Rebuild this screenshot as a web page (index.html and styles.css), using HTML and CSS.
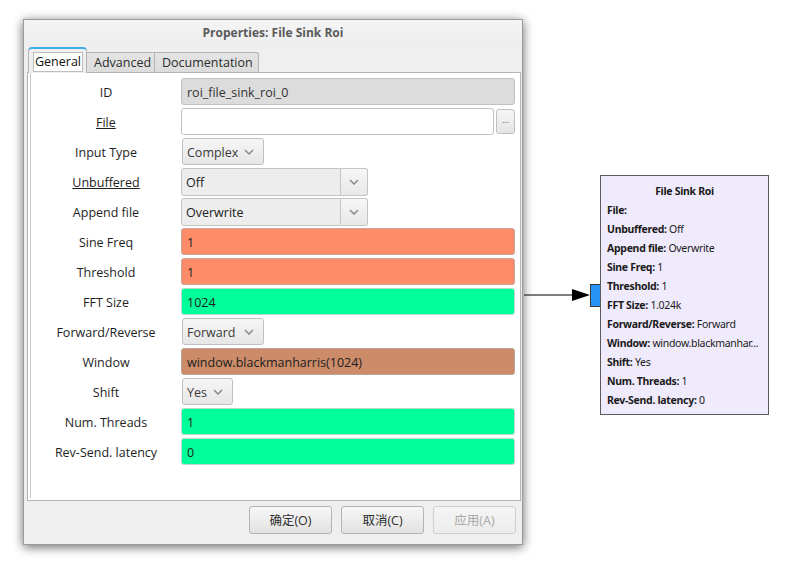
FILE: index.html
```html
<!DOCTYPE html>
<html>
<head>
<meta charset="utf-8">
<link rel="stylesheet" href="styles.css">
</head>
<body>
<div class="stage">
  <div class="dialog">
    <div class="titlebar">Properties: File Sink Roi</div>
    <div class="tabs">
      <div class="tab active"><span class="focus">General</span></div>
      <div class="tab">Advanced</div>
      <div class="tab">Documentation</div>
    </div>
    <div class="pane">
      <div class="inner">
        <div class="row"><div class="lbl">ID</div><div class="field ro">roi_file_sink_roi_0</div></div>
        <div class="row"><div class="lbl"><u>File</u></div><div class="field file"></div><div class="browse">...</div></div>
        <div class="row"><div class="lbl">Input Type</div><div class="combo w82">Complex<svg class="chev" viewBox="0 0 10 6"><polyline points="1,1 5,5 9,1"/></svg></div></div>
        <div class="row"><div class="lbl"><u>Unbuffered</u></div><div class="ecombo">Off</div><div class="ebtn"><svg class="chev" viewBox="0 0 10 6"><polyline points="1,1 5,5 9,1"/></svg></div></div>
        <div class="row"><div class="lbl">Append file</div><div class="ecombo">Overwrite</div><div class="ebtn"><svg class="chev" viewBox="0 0 10 6"><polyline points="1,1 5,5 9,1"/></svg></div></div>
        <div class="row"><div class="lbl">Sine Freq</div><div class="field real">1</div></div>
        <div class="row"><div class="lbl">Threshold</div><div class="field real">1</div></div>
        <div class="row"><div class="lbl">FFT Size</div><div class="field int">1024</div></div>
        <div class="row"><div class="lbl">Forward/Reverse</div><div class="combo w82">Forward<svg class="chev" viewBox="0 0 10 6"><polyline points="1,1 5,5 9,1"/></svg></div></div>
        <div class="row"><div class="lbl">Window</div><div class="field vec">window.blackmanharris(1024)</div></div>
        <div class="row"><div class="lbl">Shift</div><div class="combo w51">Yes<svg class="chev" viewBox="0 0 10 6"><polyline points="1,1 5,5 9,1"/></svg></div></div>
        <div class="row"><div class="lbl">Num. Threads</div><div class="field int">1</div></div>
        <div class="row"><div class="lbl">Rev-Send. latency</div><div class="field int">0</div></div>
      </div>
    </div>
    <div class="buttons">
      <div class="btn">确定(O)</div>
      <div class="btn">取消(C)</div>
      <div class="btn disabled">应用(A)</div>
    </div>
  </div>

  <svg class="edge" width="70" height="20" viewBox="0 0 70 20">
    <line x1="0" y1="10" x2="52" y2="10" stroke="#000" stroke-width="1"/>
    <polygon points="48,4 66,10 48,16" fill="#000"/>
  </svg>
  <div class="port"></div>

  <div class="block">
    <div class="btitle">File Sink Roi</div>
    <div class="bline"><b>File:</b></div>
    <div class="bline"><b>Unbuffered:</b> Off</div>
    <div class="bline"><b>Append file:</b> Overwrite</div>
    <div class="bline"><b>Sine Freq:</b> 1</div>
    <div class="bline"><b>Threshold:</b> 1</div>
    <div class="bline"><b>FFT Size:</b> 1.024k</div>
    <div class="bline"><b>Forward/Reverse:</b> Forward</div>
    <div class="bline"><b>Window:</b> window.blackmanhar...</div>
    <div class="bline"><b>Shift:</b> Yes</div>
    <div class="bline"><b>Num. Threads:</b> 1</div>
    <div class="bline"><b>Rev-Send. latency:</b> 0</div>
  </div>
</div>
</body>
</html>
```

FILE: styles.css
```css
* { box-sizing: border-box; }
html, body { margin: 0; padding: 0; background: #fff; }
body {
  font-family: "Open Sans", "Noto Sans", "Noto Sans CJK SC", sans-serif;
  font-size: 12.5px;
  color: #232627;
}
.stage {
  position: relative;
  width: 808px;
  height: 571px;
  padding: 19px 0 0 23px;
}
.dialog {
  width: 500px;
  height: 526px;
  border: 1px solid #9a9a9a;
  background: #efefef;
  box-shadow: 0 2px 10px rgba(0,0,0,0.6);
  display: flex;
  flex-direction: column;
}
.titlebar {
  height: 27px;
  line-height: 25px;
  text-align: center;
  font-weight: bold;
  font-size: 12px;
  color: #5a5a5a;
  background: linear-gradient(#f4f4f4, #eeeeee);
}
.tabs {
  height: 25px;
  display: flex;
  align-items: flex-end;
  padding-left: 4px;
  position: relative;
  z-index: 1;
}
.tab {
  height: 20px;
  line-height: 19px;
  padding: 0 7px;
  border: 1px solid #b4b4b4;
  border-bottom: none;
  border-left: none;
  background: linear-gradient(#e4e4e4, #dcdcdc);
  color: #2b2b2b;
}
.tab:nth-child(2) { width: 68px; border-left: none; }
.tab:nth-child(3) { width: 104px; border-radius: 0 3px 0 0; }
.tab.active {
  width: 59px;
  height: 26px;
  margin-bottom: -1px;
  padding: 3px 3px 0 4px;
  border: 1px solid #b4b4b4;
  border-top: 2px solid #3daee9;
  border-bottom: none;
  border-radius: 4px 4px 0 0;
  background: #efefef;
}
.focus {
  display: block;
  height: 20px;
  line-height: 18px;
  background: #fff;
  border: 1px solid #bdbdbd;
  padding-left: 1px;
  color: #111;
}
.pane {
  margin-left: 3px;
  width: 494px;
  height: 429px;
  border: 1px solid #b4b4b4;
  background: #fff;
  padding: 0 5px 2px 2px;
}
.inner {
  height: 100%;
  border-left: 1px solid #c4c4c4;
  padding-top: 5px;
  display: flex;
  flex-direction: column;
  gap: 3px;
}
.row {
  display: flex;
  align-items: center;
  height: 27px;
}
.lbl {
  width: 150px;
  text-align: center;
  color: #1e1e1e;
  padding-top: 2px;
}
.field {
  width: 334px;
  height: 27px;
  line-height: 27px;
  border: 1px solid #c2c2c2;
  border-radius: 3px;
  padding-left: 5px;
  color: #202020;
}
.field.ro { background: #dcdcdc; color: #333; }
.field.file { width: 314px; background: #fff; }
.field.real { background: #ff8c69; border-color: #c9a49a; }
.field.int { background: #00ff99; border-color: #b9d9c9; }
.field.vec { background: #cc8c69; border-color: #b8a398; }
.browse {
  width: 19px;
  height: 25px;
  margin-left: 2px;
  border: 1px solid #c0c0c0;
  border-radius: 3px;
  background: linear-gradient(#f6f6f6, #e4e4e4);
  font-size: 9px;
  color: #555;
  text-align: center;
  line-height: 20px;
}
.combo {
  height: 27px;
  margin-left: 1px;
  border: 1px solid #c0c0c0;
  border-radius: 3px;
  background: linear-gradient(#f6f6f6, #e6e6e6);
  display: flex;
  align-items: center;
  justify-content: space-between;
  padding: 2px 9px 0 4px;
  color: #3a3a3a;
}
.combo .chev { margin-top: -2px; }
.combo.w82 { width: 82px; }
.combo.w51 { width: 51px; }
.chev {
  width: 10px;
  height: 6px;
  fill: none;
  stroke: #8a8a8a;
  stroke-width: 1.5;
}
.ecombo {
  width: 160px;
  height: 28px;
  line-height: 28px;
  border: 1px solid #c4c4c4;
  border-radius: 3px 0 0 3px;
  background: #ededed;
  padding-left: 4px;
  color: #222;
}
.ebtn {
  width: 27px;
  height: 28px;
  border: 1px solid #c4c4c4;
  border-left: none;
  border-radius: 0 3px 3px 0;
  background: linear-gradient(#f6f6f6, #e8e8e8);
  display: flex;
  align-items: center;
  justify-content: center;
}
.buttons {
  flex: 1;
  display: flex;
  justify-content: flex-end;
  gap: 9px;
  padding: 5px 6px 0 0;
}
.btn {
  width: 83px;
  height: 28px;
  line-height: 27px;
  text-align: center;
  border: 1px solid #b4b4b4;
  border-radius: 3px;
  background: linear-gradient(#f7f7f7, #e2e2e2);
  color: #2e2e2e;
}
.btn.disabled {
  color: #a8a8a8;
  border-color: #cfcfcf;
  background: linear-gradient(#f5f5f5, #ececec);
}
.edge {
  position: absolute;
  left: 524px;
  top: 285px;
}
.port {
  position: absolute;
  left: 590px;
  top: 284px;
  width: 11px;
  height: 23px;
  background: #2894f5;
  border: 1px solid #3a3a3a;
}
.block {
  position: absolute;
  left: 600px;
  top: 175px;
  width: 169px;
  height: 240px;
  background: #f0ebfc;
  border: 1px solid #5b5b5b;
  padding: 6px 0 0 6px;
  font-family: "Noto Sans", sans-serif;
  font-size: 10.5px;
  letter-spacing: -0.3px;
  color: #1a1a1a;
}
.btitle {
  text-align: center;
  font-weight: bold;
  height: 19px;
  line-height: 19px;
  padding-right: 6px;
}
.bline {
  height: 19px;
  line-height: 19px;
  white-space: nowrap;
}
.bline b { font-weight: bold; }
```
